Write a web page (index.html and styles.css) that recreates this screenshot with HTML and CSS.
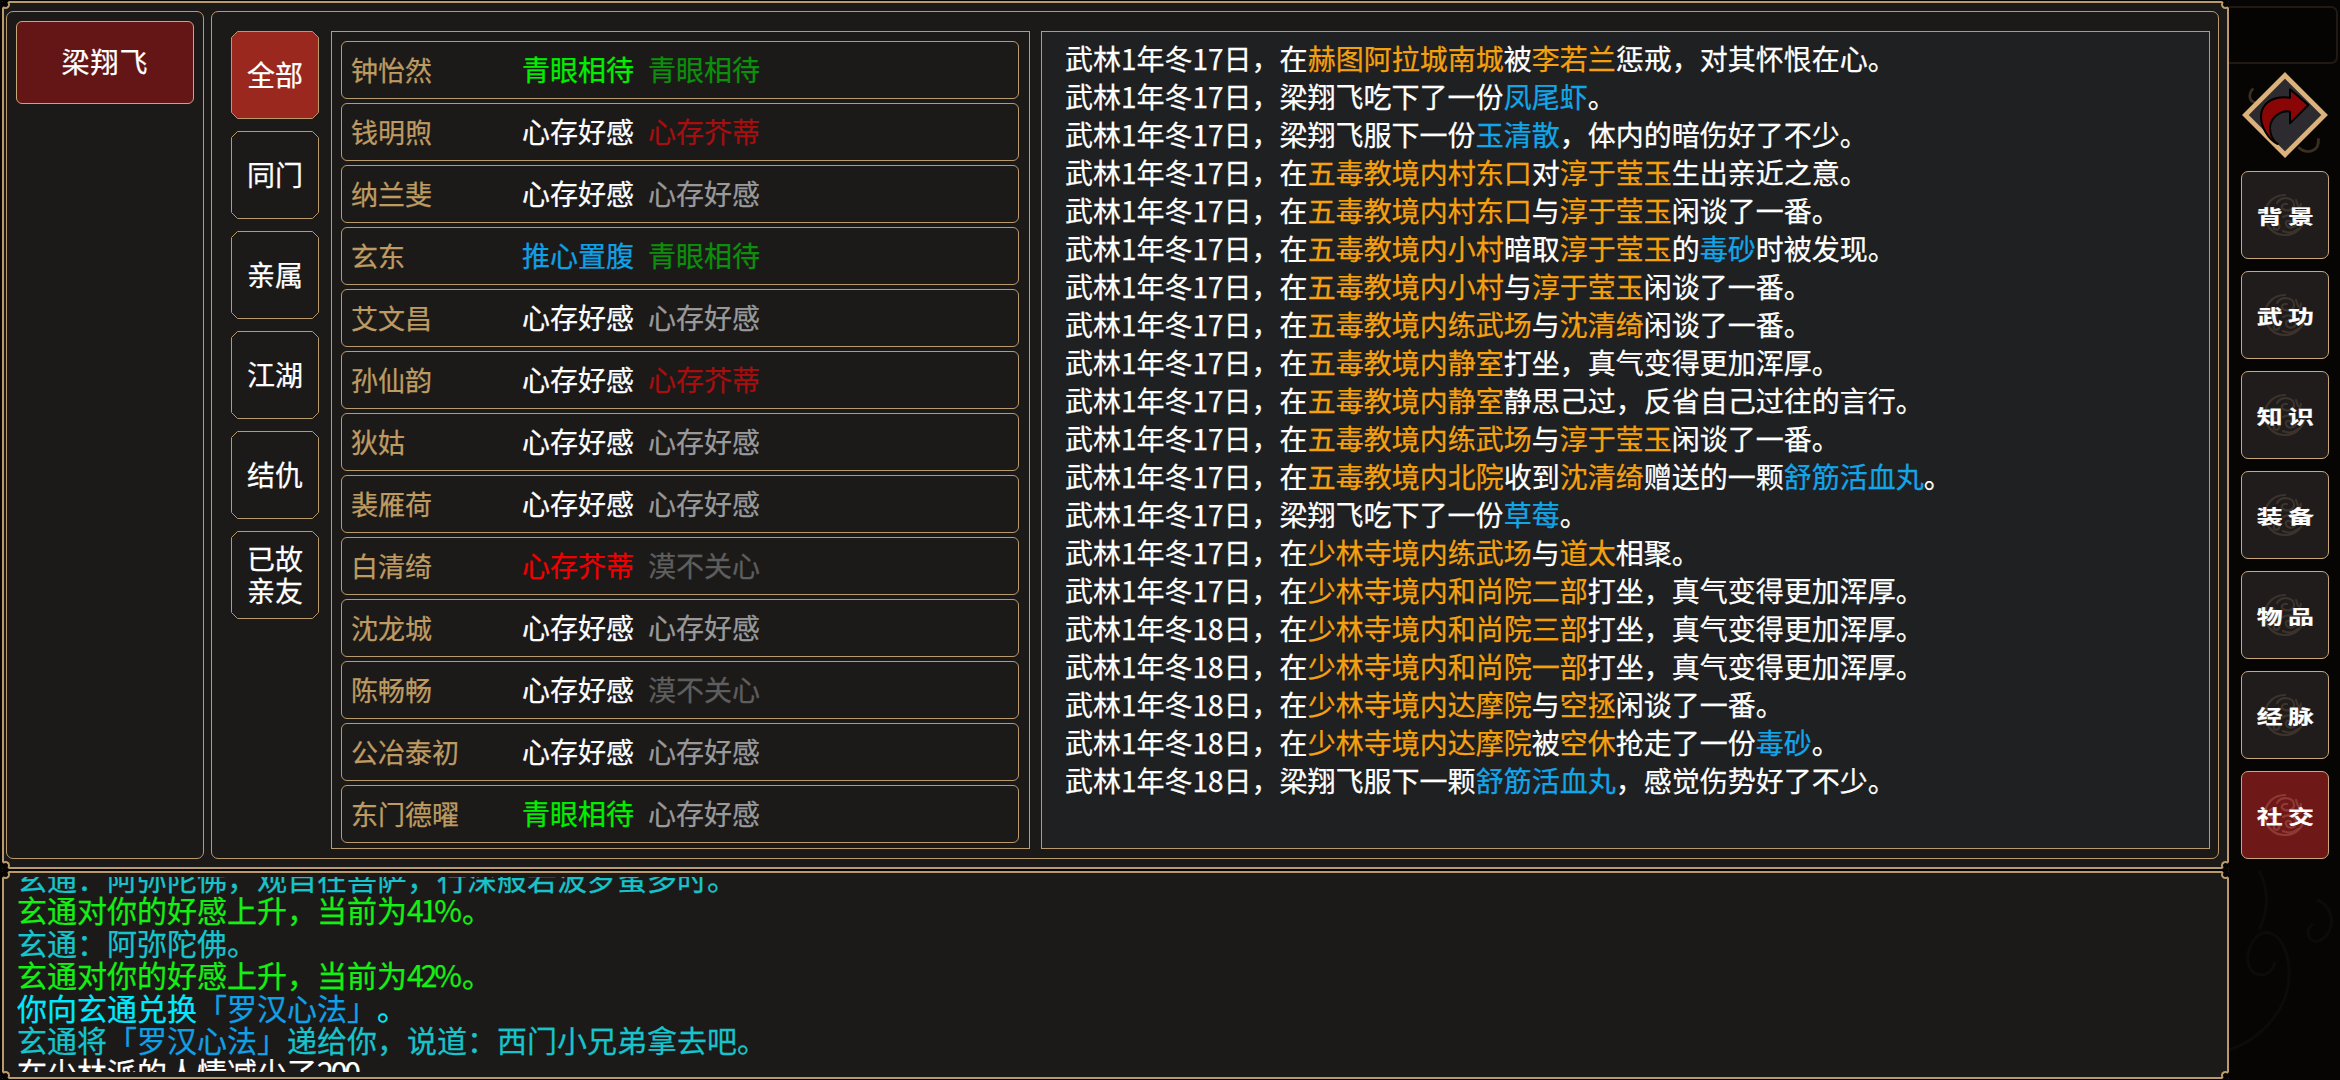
FILE: index.html
```html
<!DOCTYPE HTML>
<html>
<head>
<meta charset='utf-8'>
<title>社交</title>
<link rel="stylesheet" href="styles.css">
</head>
<body>
<svg class="defs" width="0" height="0">
  <symbol id="chamfer" viewBox="0 0 88 88">
    <polygon points="6.5,0.5 81.5,0.5 87.5,6.5 87.5,81.5 81.5,87.5 6.5,87.5 0.5,81.5 0.5,6.5"/>
  </symbol>
  <symbol id="emblem" viewBox="0 0 44 44">
    <g fill="none" stroke="currentColor" stroke-width="2.2" stroke-linecap="round">
      <path d="M22 2 C10 2 2 11 2 22 C2 33 10 42 22 42 C33 42 42 33 42 22"/>
      <path d="M14 10 C18 3 30 4 31 11 C32 17 24 19 20 16 C17 14 20 10 24 11"/>
      <path d="M7 17 C11 13 16 20 13 24 C10 28 6 24 8 21"/>
      <path d="M33 7 L35 13 M38 11 L36 17 M41 17 L36 20"/>
      <path d="M20 24 C26 20 34 24 33 30 C32 36 24 36 23 31 C22 28 26 27 28 29"/>
      <path d="M9 30 C13 27 18 31 16 35 C14 39 10 36 11 33"/>
      <path d="M20 38 C24 40 30 40 35 36"/>
    </g>
  </symbol>
</svg>

<div class="content">
  <div class="frame">
    <span class="notch tl"></span><span class="notch tr"></span><span class="notch bl"></span><span class="notch br"></span>
    <div class="panel chars">
      <div class="char-name">梁翔飞</div>
    </div>
    <div class="panel social">
      <div class="tabs">
        <div class="tab active"><svg class="tab-bg"><use href="#chamfer"/></svg><span>全部</span></div>
        <div class="tab"><svg class="tab-bg"><use href="#chamfer"/></svg><span>同门</span></div>
        <div class="tab"><svg class="tab-bg"><use href="#chamfer"/></svg><span>亲属</span></div>
        <div class="tab"><svg class="tab-bg"><use href="#chamfer"/></svg><span>江湖</span></div>
        <div class="tab"><svg class="tab-bg"><use href="#chamfer"/></svg><span>结仇</span></div>
        <div class="tab"><svg class="tab-bg"><use href="#chamfer"/></svg><span>已故<br>亲友</span></div>
      </div>
      <div class="list">
        <div class="row"><span class="name">钟怡然</span><span class="st green">青眼相待</span><span class="st green-dim">青眼相待</span></div>
        <div class="row"><span class="name">钱明煦</span><span class="st white">心存好感</span><span class="st red-dim">心存芥蒂</span></div>
        <div class="row"><span class="name">纳兰斐</span><span class="st white">心存好感</span><span class="st grey">心存好感</span></div>
        <div class="row"><span class="name">玄东</span><span class="st blue">推心置腹</span><span class="st green-dim">青眼相待</span></div>
        <div class="row"><span class="name">艾文昌</span><span class="st white">心存好感</span><span class="st grey">心存好感</span></div>
        <div class="row"><span class="name">孙仙韵</span><span class="st white">心存好感</span><span class="st red-dim">心存芥蒂</span></div>
        <div class="row"><span class="name">狄姑</span><span class="st white">心存好感</span><span class="st grey">心存好感</span></div>
        <div class="row"><span class="name">裴雁荷</span><span class="st white">心存好感</span><span class="st grey">心存好感</span></div>
        <div class="row"><span class="name">白清绮</span><span class="st red">心存芥蒂</span><span class="st dark">漠不关心</span></div>
        <div class="row"><span class="name">沈龙城</span><span class="st white">心存好感</span><span class="st grey">心存好感</span></div>
        <div class="row"><span class="name">陈畅畅</span><span class="st white">心存好感</span><span class="st dark">漠不关心</span></div>
        <div class="row"><span class="name">公冶泰初</span><span class="st white">心存好感</span><span class="st grey">心存好感</span></div>
        <div class="row"><span class="name">东门德曜</span><span class="st green">青眼相待</span><span class="st grey">心存好感</span></div>
      </div>
      <div class="events">
        <p>武林1年冬17日，在<b>赫图阿拉城南城</b>被<b>李若兰</b>惩戒，对其怀恨在心。</p>
        <p>武林1年冬17日，梁翔飞吃下了一份<i>凤尾虾</i>。</p>
        <p>武林1年冬17日，梁翔飞服下一份<i>玉清散</i>，体内的暗伤好了不少。</p>
        <p>武林1年冬17日，在<b>五毒教境内村东口</b>对<b>淳于莹玉</b>生出亲近之意。</p>
        <p>武林1年冬17日，在<b>五毒教境内村东口</b>与<b>淳于莹玉</b>闲谈了一番。</p>
        <p>武林1年冬17日，在<b>五毒教境内小村</b>暗取<b>淳于莹玉</b>的<i>毒砂</i>时被发现。</p>
        <p>武林1年冬17日，在<b>五毒教境内小村</b>与<b>淳于莹玉</b>闲谈了一番。</p>
        <p>武林1年冬17日，在<b>五毒教境内练武场</b>与<b>沈清绮</b>闲谈了一番。</p>
        <p>武林1年冬17日，在<b>五毒教境内静室</b>打坐，真气变得更加浑厚。</p>
        <p>武林1年冬17日，在<b>五毒教境内静室</b>静思己过，反省自己过往的言行。</p>
        <p>武林1年冬17日，在<b>五毒教境内练武场</b>与<b>淳于莹玉</b>闲谈了一番。</p>
        <p>武林1年冬17日，在<b>五毒教境内北院</b>收到<b>沈清绮</b>赠送的一颗<i>舒筋活血丸</i>。</p>
        <p>武林1年冬17日，梁翔飞吃下了一份<i>草莓</i>。</p>
        <p>武林1年冬17日，在<b>少林寺境内练武场</b>与<b>道太</b>相聚。</p>
        <p>武林1年冬17日，在<b>少林寺境内和尚院二部</b>打坐，真气变得更加浑厚。</p>
        <p>武林1年冬18日，在<b>少林寺境内和尚院三部</b>打坐，真气变得更加浑厚。</p>
        <p>武林1年冬18日，在<b>少林寺境内和尚院一部</b>打坐，真气变得更加浑厚。</p>
        <p>武林1年冬18日，在<b>少林寺境内达摩院</b>与<b>空拯</b>闲谈了一番。</p>
        <p>武林1年冬18日，在<b>少林寺境内达摩院</b>被<b>空休</b>抢走了一份<i>毒砂</i>。</p>
        <p>武林1年冬18日，梁翔飞服下一颗<i>舒筋活血丸</i>，感觉伤势好了不少。</p>
      </div>
    </div>
  </div>

  <div class="chat">
    <span class="notch tl"></span><span class="notch tr"></span><span class="notch bl"></span><span class="notch br"></span>
    <div class="chat-clip">
      <div class="chat-lines">
        <p class="teal">玄通：阿弥陀佛，观自在菩萨，行深般若波罗蜜多时。</p>
        <p class="lime">玄通对你的好感上升，当前为<span class="num">41%</span>。</p>
        <p class="teal">玄通：阿弥陀佛。</p>
        <p class="lime">玄通对你的好感上升，当前为<span class="num">42%</span>。</p>
        <p class="aqua">你向玄通兑换<i>「罗汉心法」</i>。</p>
        <p class="teal">玄通将<i>「罗汉心法」</i>递给你，说道：西门小兄弟拿去吧。</p>
        <p class="plain">在少林派的人情减少了<span class="num">200</span></p>
      </div>
    </div>
  </div>
</div>

<div class="side">
  <svg class="swirls" viewBox="0 0 111 210" width="111" height="210">
    <g fill="none" stroke="#0e0a07" stroke-width="3">
      <path d="M0 180 C30 170 62 140 60 100 C58 60 30 50 20 80 C12 105 40 115 46 92"/>
      <path d="M30 0 C40 20 40 40 30 60"/>
      <path d="M88 30 C105 36 108 60 92 70 C80 76 74 60 84 54"/>
    </g>
  </svg>
  <div class="top-box"></div>
  <div class="back">
    <svg viewBox="0 0 300 330" width="100" height="110">
      <g fill="none" stroke="#3a3022" stroke-width="8">
        <path d="M55 85 C40 100 40 125 62 128"/>
        <path d="M190 262 C215 285 255 275 250 235"/>
      </g>
      <polygon points="150,46 269,165 150,284 31,165" fill="#2e2b30" stroke="#dcb27c" stroke-width="14"/>
      <path d="M165 88 L220 135 L165 190 L165 155 C140 150 105 170 105 205 C105 225 115 245 128 252 C100 240 78 200 78 170 C78 130 115 105 165 113 Z" fill="#8a0505" stroke="#000" stroke-width="6" stroke-linejoin="round"/>
    </svg>
  </div>
  <div class="menu">
    <div class="menu-btn"><svg class="emblem"><use href="#emblem"/></svg><span>背景</span></div>
    <div class="menu-btn"><svg class="emblem"><use href="#emblem"/></svg><span>武功</span></div>
    <div class="menu-btn"><svg class="emblem"><use href="#emblem"/></svg><span>知识</span></div>
    <div class="menu-btn"><svg class="emblem"><use href="#emblem"/></svg><span>装备</span></div>
    <div class="menu-btn"><svg class="emblem"><use href="#emblem"/></svg><span>物品</span></div>
    <div class="menu-btn"><svg class="emblem"><use href="#emblem"/></svg><span>经脉</span></div>
    <div class="menu-btn active"><svg class="emblem"><use href="#emblem"/></svg><span>社交</span></div>
  </div>
</div>
</body>
</html>
```

FILE: styles.css
```css
html,body{
  margin: 0;
  height: 100%;
}
body{
  width: 2340px;
  height: 1080px;
  overflow: hidden;
  display: flex;
  background: #070504;
  color: #fff;
  font-family: "Noto Sans CJK SC", "Noto Sans", sans-serif;
  -webkit-text-stroke: 0.25px;
  text-spacing-trim: space-all;
}
p{
  margin: 0;
}
b,i{
  font-weight: 400;
  font-style: normal;
}
.defs{
  position: absolute;
}

/* main column */
.content{
  width: 2227px;
  margin: 1px 0 0 2px;
  display: flex;
  flex-direction: column;
  gap: 2px;
}
.frame{
  position: relative;
  box-sizing: border-box;
  height: 868px;
  border: 2px solid #b89a6c;
  background: #1c1a19;
  padding: 8px 8px 8px 2px;
  display: flex;
  gap: 7px;
}
.notch{
  position: absolute;
  width: 5px;
  height: 5px;
  border-radius: 50%;
  background: #070504;
  border: 2px solid #b89a6c;
}
.notch.tl{ top: -3px; left: -3px; border-top-color: transparent; border-left-color: transparent; }
.notch.tr{ top: -3px; right: -3px; border-top-color: transparent; border-right-color: transparent; }
.notch.bl{ bottom: -3px; left: -3px; border-bottom-color: transparent; border-left-color: transparent; }
.notch.br{ bottom: -3px; right: -3px; border-bottom-color: transparent; border-right-color: transparent; }
.panel{
  box-sizing: border-box;
  border: 1px solid #b89a6c;
  border-radius: 7px;
}
.chars{
  width: 198px;
  padding: 9px;
}
.char-name{
  height: 83px;
  box-sizing: border-box;
  border: 1px solid #c8a878;
  border-radius: 6px;
  background: #641616;
  font-size: 28px;
  letter-spacing: 1px;
  line-height: 79px;
  text-align: center;
}
.social{
  flex: 1;
  display: flex;
  padding: 19px 8px 9px 19px;
}

/* tabs */
.tabs{
  width: 88px;
  margin-right: 12px;
  display: flex;
  flex-direction: column;
  gap: 12px;
}
.tab{
  position: relative;
  box-sizing: border-box;
  height: 88px;
  padding-bottom: 2px;
  display: flex;
  align-items: center;
  justify-content: center;
  font-size: 28px;
  line-height: 32px;
  text-align: center;
}
.tab span{
  position: relative;
}
.tab-bg{
  position: absolute;
  left: 0;
  top: 0;
  width: 88px;
  height: 88px;
  fill: #1c1a19;
  stroke: #b89a6c;
  stroke-width: 1;
}
.tab.active .tab-bg{
  fill: #9a281e;
}

/* relations */
.list{
  box-sizing: border-box;
  width: 699px;
  margin-right: 11px;
  border: 1px solid #b89a6c;
  padding: 9px 10px 5px 9px;
  display: flex;
  flex-direction: column;
  gap: 4px;
}
.row{
  box-sizing: border-box;
  height: 58px;
  border: 1px solid #b89a6c;
  border-radius: 6px;
  padding: 0 0 2px 9px;
  display: flex;
  align-items: center;
  font-size: 28px;
}
.name{
  width: 171px;
  font-size: 27px;
  color: #bd9b62;
}
.st{
  width: 112px;
  margin-right: 14px;
}
.green{ color: #00f000; }
.green-dim{ color: #0c8f0c; }
.white{ color: #fff; }
.grey{ color: #999; }
.dark{ color: #5e5e5e; }
.red{ color: #f00000; }
.red-dim{ color: #a50f0f; }
.blue{ color: #0fa0e6; }

/* event log */
.events{
  box-sizing: border-box;
  flex: 1;
  border: 1px solid #b89a6c;
  background: #1f2021;
  padding: 7px 0 0 23px;
  font-size: 28px;
  line-height: 38px;
}
.events b{
  color: #f5a00f;
}
.events i{
  color: #12a5e8;
}

/* chat */
.chat{
  position: relative;
  box-sizing: border-box;
  height: 208px;
  border: 2px solid #b89a6c;
  background: #1c1a19;
  padding: 4px 0 5px 13px;
}
.chat-clip{
  height: 195px;
  overflow: hidden;
}
.chat-lines{
  margin-top: -16px;
  font-size: 30px;
  line-height: 32.4px;
}
.num{
  letter-spacing: -3px;
  margin-right: 3px;
}
.teal{ color: #17c4cc; }
.lime{ color: #14f014; }
.aqua{ color: #00eaff; }
.plain{ color: #fff; }
.chat-lines i{
  color: #0fa0e6;
}

/* right column */
.side{
  position: relative;
  flex: 1;
  box-sizing: border-box;
  padding: 6px 2px 0 0;
  display: flex;
  flex-direction: column;
  align-items: stretch;
}
.swirls{
  position: absolute;
  left: 0;
  bottom: 0;
}
.top-box{
  height: 58px;
  box-sizing: border-box;
  border: 2px solid #211a12;
  border-left: 0;
  border-radius: 0 7px 7px 0;
  background: #050403;
}
.back{
  height: 110px;
  margin-top: -4px;
  padding-left: 6px;
}
.back svg{
  display: block;
}
.menu{
  width: 88px;
  margin: 1px 0 0 12px;
  display: flex;
  flex-direction: column;
  gap: 12px;
}
.menu-btn{
  position: relative;
  box-sizing: border-box;
  height: 88px;
  border: 1px solid #c8a878;
  border-radius: 7px;
  background: #1f1c1b;
  color: #3c332d;
  display: flex;
  align-items: center;
  justify-content: center;
}
.menu-btn.active{
  background: #6e1818;
  color: #8e3a34;
}
.emblem{
  position: absolute;
  left: 21px;
  top: 21px;
  width: 44px;
  height: 44px;
}
.menu-btn span{
  position: relative;
  color: #fff;
  font-size: 24px;
  font-weight: 700;
  letter-spacing: 5px;
  margin-right: -5px;
  transform: scale(1.08, 0.82);
}
```
